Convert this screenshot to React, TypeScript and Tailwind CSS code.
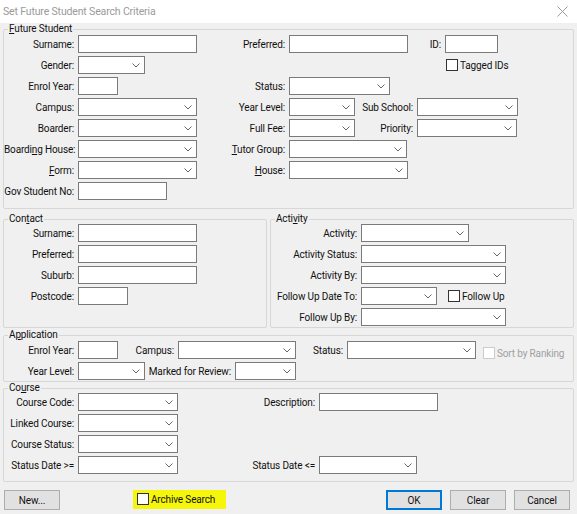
import React from 'react';

type Kids = { children?: React.ReactNode };

function Label({ w, children, className = '' }: { w: string; className?: string } & Kids) {
  return (
    <span className={`${w} shrink-0 whitespace-nowrap pr-[4px] text-right ${className}`}>{children}</span>
  );
}

function TextBox({ w }: { w: string }) {
  return <div className={`${w} h-[18px] shrink-0 border border-[#7a7a7a] bg-white`} />;
}

function Combo({ w }: { w: string }) {
  return (
    <div className={`${w} flex h-[18px] shrink-0 items-center justify-end border border-[#7a7a7a] bg-white pr-[4px]`}>
      <svg width="8" height="5" viewBox="0 0 8 5">
        <path d="M0.5 0.5L4 4L7.5 0.5" fill="none" stroke="#666" strokeWidth="1" />
      </svg>
    </div>
  );
}

function Check({ label, disabled = false, className = '' }: { label: string; disabled?: boolean; className?: string }) {
  return (
    <div className={`flex shrink-0 items-center gap-[2px] ${className}`}>
      <span
        className={`h-[12px] w-[12px] border bg-white ${disabled ? 'border-[#cccccc] bg-[#f0f0f0]' : 'border-[#333333]'}`}
      />
      <span className={disabled ? 'text-[#a0a0a0]' : ''}>{label}</span>
    </div>
  );
}

function Group({ title, className = '', children }: { title: React.ReactNode; className?: string } & Kids) {
  return (
    <div className={`relative rounded-[2px] border border-[#d7d7d7] ${className}`}>
      <span className="absolute -top-[7px] left-[4px] bg-[#f0f0f0] px-[1px] leading-[12px]">{title}</span>
      {children}
    </div>
  );
}

function Row({ children, className = '' }: { className?: string } & Kids) {
  return <div className={`flex h-[18px] items-center ${className}`}>{children}</div>;
}

function Button({ children, w, primary = false }: { w: string; primary?: boolean } & Kids) {
  return (
    <div
      className={`${w} flex h-[20px] shrink-0 items-center justify-center border bg-[#e1e1e1] ${
        primary ? 'border-[#0078d7] shadow-[inset_0_0_0_1px_#0078d7]' : 'border-[#adadad]'
      }`}
    >
      {children}
    </div>
  );
}

export default function App() {
  return (
    <div className="h-[514px] w-[577px] overflow-hidden bg-[#f0f0f0] font-['Roboto','Liberation_Sans',sans-serif] text-[10px] leading-[13px] tracking-[-0.15px] text-[#111]">
      <div className="flex h-[23px] items-center justify-between bg-white pl-[3px] pr-[9px]">
        <span className="text-[10.5px] text-[#9a9a9a]">Set Future Student Search Criteria</span>
        <svg width="11" height="11" viewBox="0 0 11 11">
          <path d="M0.5 0.5L10.5 10.5M10.5 0.5L0.5 10.5" stroke="#9a9a9a" strokeWidth="1" />
        </svg>
      </div>

      <Group
        title={
          <>
            <u>F</u>uture Student
          </>
        }
        className="mx-[3px] mt-[6px] pb-[8px] pt-[5px]"
      >
        <div className="flex flex-col gap-[3px]">
          <Row>
            <Label w="w-[74px]">Surname:</Label>
            <TextBox w="w-[119px]" />
            <Label w="w-[92px]">Preferred:</Label>
            <TextBox w="w-[119px]" />
            <Label w="w-[37px]">ID:</Label>
            <TextBox w="w-[53px]" />
          </Row>
          <Row>
            <Label w="w-[74px]">Gender:</Label>
            <Combo w="w-[67px]" />
            <div className="w-[301px] shrink-0" />
            <Check label="Tagged IDs" />
          </Row>
          <Row>
            <Label w="w-[74px]">Enrol Year:</Label>
            <TextBox w="w-[40px]" />
            <Label w="w-[171px]">Status:</Label>
            <Combo w="w-[101px]" />
          </Row>
          <Row>
            <Label w="w-[74px]">Campus:</Label>
            <Combo w="w-[119px]" />
            <Label w="w-[92px]">Year Level:</Label>
            <Combo w="w-[66px]" />
            <Label w="w-[62px]">Sub School:</Label>
            <Combo w="w-[101px]" />
          </Row>
          <Row>
            <Label w="w-[74px]">Boarder:</Label>
            <Combo w="w-[119px]" />
            <Label w="w-[92px]">Full Fee:</Label>
            <Combo w="w-[66px]" />
            <Label w="w-[62px]">Priority:</Label>
            <Combo w="w-[100px]" />
          </Row>
          <Row>
            <Label w="w-[74px]">
              Boardi<u>n</u>g House:
            </Label>
            <Combo w="w-[119px]" />
            <Label w="w-[92px]">
              <u>T</u>utor Group:
            </Label>
            <Combo w="w-[118px]" />
          </Row>
          <Row>
            <Label w="w-[74px]">
              <u>F</u>orm:
            </Label>
            <Combo w="w-[119px]" />
            <Label w="w-[92px]">
              <u>H</u>ouse:
            </Label>
            <Combo w="w-[119px]" />
          </Row>
          <Row>
            <Label w="w-[74px]">Gov Student No:</Label>
            <TextBox w="w-[89px]" />
          </Row>
        </div>
      </Group>

      <div className="mx-[3px] mt-[10px] flex gap-[3px]">
        <Group
          title={
            <>
              Con<u>t</u>act
            </>
          }
          className="w-[264px] shrink-0 pt-[4px]"
        >
          <div className="flex flex-col gap-[3px]">
            <Row>
              <Label w="w-[74px]">Surname:</Label>
              <TextBox w="w-[119px]" />
            </Row>
            <Row>
              <Label w="w-[74px]">Preferred:</Label>
              <TextBox w="w-[119px]" />
            </Row>
            <Row>
              <Label w="w-[74px]">Suburb:</Label>
              <TextBox w="w-[119px]" />
            </Row>
            <Row>
              <Label w="w-[74px]">Postcode:</Label>
              <TextBox w="w-[50px]" />
            </Row>
          </div>
        </Group>
        <Group
          title={
            <>
              Acti<u>v</u>ity
            </>
          }
          className="flex-1 pb-[1px] pt-[4px]"
        >
          <div className="flex flex-col gap-[3px]">
            <Row>
              <Label w="w-[90px]">Activity:</Label>
              <Combo w="w-[108px]" />
            </Row>
            <Row>
              <Label w="w-[90px]">Activity Status:</Label>
              <Combo w="w-[145px]" />
            </Row>
            <Row>
              <Label w="w-[90px]">Activity By:</Label>
              <Combo w="w-[145px]" />
            </Row>
            <Row>
              <Label w="w-[90px]">Follow Up Date To:</Label>
              <Combo w="w-[76px]" />
              <Check label="Follow Up" className="ml-[11px]" />
            </Row>
            <Row>
              <Label w="w-[90px]">Follow Up By:</Label>
              <Combo w="w-[145px]" />
            </Row>
          </div>
        </Group>
      </div>

      <Group
        title={
          <>
            A<u>p</u>plication
          </>
        }
        className="mx-[3px] mt-[7px] pb-[1px] pt-[5px]"
      >
        <div className="flex flex-col gap-[3px]">
          <Row>
            <Label w="w-[74px]">Enrol Year:</Label>
            <TextBox w="w-[40px]" />
            <Label w="w-[60px]">Campus:</Label>
            <Combo w="w-[118px]" />
            <Label w="w-[51px]">Status:</Label>
            <Combo w="w-[129px]" />
            <Check label="Sort by Ranking" disabled className="ml-[7px] mt-[6px]" />
          </Row>
          <Row>
            <Label w="w-[74px]">Year Level:</Label>
            <Combo w="w-[67px]" />
            <Label w="w-[90px]">Marked for Review:</Label>
            <Combo w="w-[61px]" />
          </Row>
        </div>
      </Group>

      <Group
        title={
          <>
            Co<u>u</u>rse
          </>
        }
        className="mx-[3px] mt-[6px] pb-[7px] pt-[4px]"
      >
        <div className="flex flex-col gap-[3px]">
          <Row>
            <Label w="w-[74px]">Course Code:</Label>
            <Combo w="w-[100px]" />
            <Label w="w-[141px]">Description:</Label>
            <TextBox w="w-[119px]" />
          </Row>
          <Row>
            <Label w="w-[74px]">Linked Course:</Label>
            <Combo w="w-[100px]" />
          </Row>
          <Row>
            <Label w="w-[74px]">Course Status:</Label>
            <Combo w="w-[100px]" />
          </Row>
          <Row>
            <Label w="w-[74px]">Status Date &gt;=</Label>
            <Combo w="w-[100px]" />
            <Label w="w-[141px]">Status Date &lt;=</Label>
            <Combo w="w-[98px]" />
          </Row>
        </div>
      </Group>

      <div className="mt-[8px] flex items-center pl-[4px] pr-[7px]">
        <Button w="w-[56px]">New...</Button>
        <div className="ml-[73px] -mt-[2px] flex h-[19px] w-[93px] items-center bg-[#f6f60a] pl-[4px]">
          <Check label="Archive Search" />
        </div>
        <div className="ml-auto flex gap-[8px]">
          <Button w="w-[56px]" primary>
            OK
          </Button>
          <Button w="w-[56px]">Clear</Button>
          <Button w="w-[56px]">Cancel</Button>
        </div>
      </div>
    </div>
  );
}
